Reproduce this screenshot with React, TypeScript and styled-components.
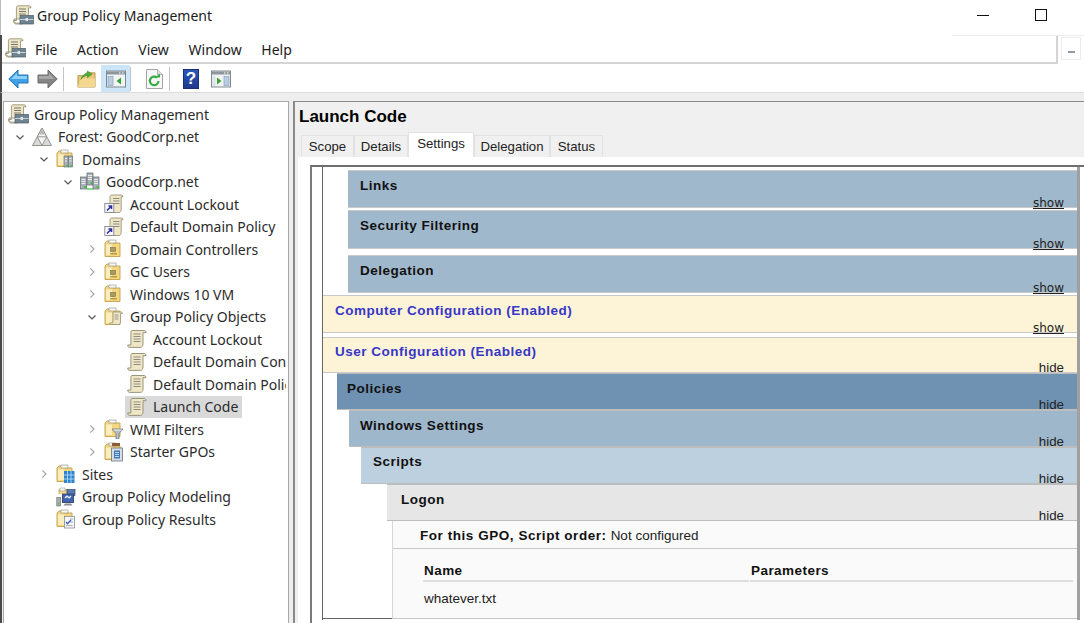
import React from "react";
import styled, { createGlobalStyle } from "styled-components";

const GlobalStyle = createGlobalStyle`
  html, body {
    margin: 0;
    padding: 0;
    background: #ffffff;
    overflow: hidden;
  }
  * {
    box-sizing: border-box;
  }
`;

const UI_FONT = `"Noto Sans", "Open Sans", sans-serif`;
const MMC_FONT = `"Liberation Sans", Arial, sans-serif`;

/* ---------- icons ---------- */

const Scroll = () => (
  <>
    <path d="M5 1.5h12c1.2 0 2 .9 2 2.2h-3V15c0 1.8-1 3.4-2.4 3.4H2.6C1.4 18.4.7 17.4.7 16h3.2V3.5c0-1.1.4-2 1.1-2z" fill="#efe6c4" stroke="#8f8a72" strokeWidth=".9" />
    <path d="M6.5 5h7M6.5 7.5h7M6.5 10h7M6.5 12.500h7" stroke="#8c8c86" strokeWidth="1" />
  </>
);

const GpoIcon = () => (
  <svg width="20" height="20" viewBox="0 0 20 20"><Scroll /></svg>
);

const ConsoleIcon = () => (
  <svg width="21" height="20" viewBox="0 0 21 20">
    <path d="M5 .8h11c1.200 0 2 .8 2 2h-2.500V14H1c0 2 .8 3.600 2 4.200h6V19H3C1.400 19 .4 17.400.4 15.500h3V2.800C3.400 1.600 4 .8 5 .8z" fill="#efe6c4" stroke="#8f8a72" strokeWidth=".8" />
    <path d="M6 4h7M6 6.500h7M6 9h7" stroke="#77776f" strokeWidth="1.100" />
    <rect x="7" y="10.500" width="13.500" height="8.500" fill="#6f8391" stroke="#4c5b66" strokeWidth=".7" />
    <path d="M7 14.500h13.500" stroke="#c8d2d8" strokeWidth="1" />
    <rect x="12.500" y="13" width="2.500" height="3" fill="#dfe5e8" />
  </svg>
);

const ForestIcon = () => (
  <svg width="20" height="20" viewBox="0 0 20 20">
    <path d="M10 1 19.500 18.500H.5z" fill="#d9d9d6" stroke="#8b8b88" strokeWidth=".9" />
    <path d="M5.300 9.800h9.400L10 18.500zM5.300 9.800 10 1l4.700 8.800" fill="#f5f5f3" stroke="#8b8b88" strokeWidth=".9" />
    <path d="M10 1.800 7 7.500h6z" fill="#b9b9b6" />
  </svg>
);

const Server = ({ x, y }: { x: number; y: number }) => (
  <g transform={`translate(${x} ${y})`}>
    <rect width="6" height="12" fill="#a8b1b6" stroke="#5f686d" strokeWidth=".7" />
    <path d="M1 2.500h4M1 4.500h4M1 6.500h4" stroke="#eef1f2" strokeWidth=".9" />
    <rect x="3.500" y="9" width="2" height="2" fill="#3fc23f" />
  </g>
);

const ServersIcon = () => (
  <svg width="20" height="20" viewBox="0 0 20 20">
    <Server x={7} y={1} />
    <Server x={.5} y={5} />
    <Server x={13} y={5} />
    <path d="M6.500 17h7" stroke="#3fc23f" strokeWidth="1.200" />
  </svg>
);

const Folder = ({ children }: { children?: React.ReactNode }) => (
  <svg width="20" height="20" viewBox="0 0 20 20">
    <path d="M1 4V17.500H16V4H9L8 2H3z" fill="#f5d681" stroke="#c3a04e" strokeWidth=".9" />
    <path d="M2 5.500h6V16H2z" fill="#fbeebe" />
    <rect x="5" y="1" width="7" height="3" fill="#f7f7f4" stroke="#8f8f88" strokeWidth=".6" />
    {children}
  </svg>
);

const OuIcon = () => (
  <Folder>
    <rect x="6.500" y="8.500" width="5" height="4" fill="#a99a62" stroke="#7b6e3d" strokeWidth=".6" />
    <rect x="6" y="14" width="7" height="1.500" fill="#b59c44" />
  </Folder>
);

const DomainsIcon = () => (
  <Folder>
    <g transform="translate(8 7)">
      <rect width="4" height="11" fill="#a8b1b6" stroke="#5f686d" strokeWidth=".6" />
      <rect x="4.500" width="4" height="11" fill="#a8b1b6" stroke="#5f686d" strokeWidth=".6" />
      <path d="M1 2.500h2M5.500 2.500h2M1 5h2M5.500 5h2" stroke="#ffffff" strokeWidth=".8" />
      <rect x="2" y="9" width="1.500" height="1.500" fill="#3fc23f" />
      <rect x="6.500" y="9" width="1.500" height="1.500" fill="#3fc23f" />
    </g>
  </Folder>
);

const GpoFolderIcon = () => (
  <Folder>
    <path d="M9 5h8c1 0 1.500.6 1.500 1.500h-2V15c0 1.500-.7 2.500-2 2.500H7.500c-1 0-1.500-.7-1.500-1.700h3z" fill="#efe6c4" stroke="#8f8a72" strokeWidth=".7" />
    <path d="M10.500 8h4M10.500 10h4M10.500 12h4" stroke="#8c8c86" strokeWidth=".8" />
  </Folder>
);

const FilterFolderIcon = () => (
  <Folder>
    <path d="M8 10h11l-4 4.500V20h-3v-5.500z" fill="#b7bfc6" stroke="#66717a" strokeWidth=".7" />
    <path d="M9.500 11h8" stroke="#f2f4f5" strokeWidth=".9" />
  </Folder>
);

const StarterFolderIcon = () => (
  <Folder>
    <rect x="8" y="1" width="8" height="3" fill="#8d5b3c" />
    <rect x="7.500" y="6" width="11" height="13" fill="#d7dde2" stroke="#6b757d" strokeWidth=".8" />
    <rect x="10" y="8.500" width="6" height="8" fill="#3e78bd" />
    <path d="M11 10.500h4M11 12.500h4M11 14.500h4" stroke="#ffffff" strokeWidth=".7" />
  </Folder>
);

const SitesIcon = () => (
  <Folder>
    <rect x="8" y="7" width="10.500" height="12" fill="#2d83cf" />
    <path d="M11.500 7v12M15 7v12M8 11h10.500M8 15h10.500" stroke="#bfe0f7" strokeWidth=".8" />
  </Folder>
);

const ModelingIcon = () => (
  <svg width="21" height="20" viewBox="0 0 21 20">
    <path d="M3 7V2.500h8V6" fill="#f5d681" stroke="#c3a04e" strokeWidth=".8" />
    <rect x="4" y="1" width="5" height="3" fill="#f6f6f3" stroke="#8f8f88" strokeWidth=".5" />
    <rect x="11" y="2.500" width="8" height="6" fill="#587bb8" stroke="#38476e" strokeWidth=".7" />
    <rect x="6.500" y="7" width="11" height="8.500" fill="#3f64b5" stroke="#3a4254" strokeWidth=".9" />
    <path d="M9 11l2-2 2 2 2-2" stroke="#ffffff" strokeWidth="1.100" fill="none" />
    <path d="M9 16.500h6l1.500 2h-9z" fill="#8b9197" />
    <rect x=".8" y="10.500" width="3.700" height="8.500" fill="#a9b0b4" stroke="#5f686d" strokeWidth=".6" />
    <rect x="1.800" y="16" width="1.500" height="1.500" fill="#3fc23f" />
  </svg>
);

const ResultsIcon = () => (
  <Folder>
    <rect x="8.500" y="7.500" width="10" height="11.500" fill="#f4f6f8" stroke="#8a9096" strokeWidth=".8" />
    <path d="M14 10h3M14 13h3" stroke="#9aa1a7" strokeWidth=".8" />
    <path d="M10 13l1.500 1.800L15 11" stroke="#3a62b5" strokeWidth="1.300" fill="none" />
    <path d="M10 16.500h6.500" stroke="#9aa1a7" strokeWidth=".8" />
  </Folder>
);

const LinkIcon = () => (
  <svg width="20" height="20" viewBox="0 0 20 20">
    <path d="M8 1h9.500c.8 0 1.500.7 1.500 1.700h-1.800V15c0 2-.8 3.500-2 3.500H6V2.500C6 1.700 7 1 8 1z" fill="#efe6c4" stroke="#8f8a72" strokeWidth=".8" />
    <path d="M9 4.500h6.500M9 7h6.500M9 9.500h6.500" stroke="#8c8c86" strokeWidth="1" />
    <rect x=".8" y="9.500" width="9" height="9" fill="#f7f7fb" stroke="#7a7a8a" strokeWidth=".8" />
    <path d="M3 16.500 7 12.500M4.500 12h3v3" stroke="#2a2f9e" strokeWidth="1.500" fill="none" />
  </svg>
);

const Caret = ({ open }: { open: boolean }) => (
  <svg width="10" height="10" viewBox="0 0 10 10">
    {open ? (
      <path d="M1.500 3.500 5 7l3.500-3.500" fill="none" stroke="#555555" strokeWidth="1.200" />
    ) : (
      <path d="M3.300 1.300 7 5 3.300 8.700" fill="none" stroke="#a6a6a6" strokeWidth="1.200" />
    )}
  </svg>
);

const BackIcon = () => (
  <svg width="21" height="20" viewBox="0 0 21 20">
    <path d="M10 1 .8 10 10 19v-5h10V6H10z" fill="#3ea0e6" stroke="#1f75bf" strokeWidth="1" />
    <path d="M9 4 3 10h16V7H9z" fill="#8fd0f7" />
  </svg>
);

const ForwardIcon = () => (
  <svg width="21" height="20" viewBox="0 0 21 20">
    <path d="M11 1l9.200 9L11 19v-5H1V6h10z" fill="#858585" stroke="#6c6c6c" strokeWidth="1" />
    <path d="M12 4l6 6H2V7h10z" fill="#a8a8a8" />
  </svg>
);

const UpFolderIcon = () => (
  <svg width="19" height="19" viewBox="0 0 20 20">
    <path d="M1 7V19H19V4H10L8 7z" fill="#e9c878" stroke="#b18f44" strokeWidth=".9" />
    <path d="M1 19 4 10h15v9z" fill="#f3d88f" />
    <path d="M4 11c2-5 4-6 7-6.500V2l5 3.500-5 3.500V6.800C8.500 7 6 8 4 11z" fill="#4bae3a" stroke="#2f7f28" strokeWidth=".5" />
  </svg>
);

const PaneIcon = ({ flip }: { flip?: boolean }) => (
  <svg width="20" height="18" viewBox="0 0 20 18">
    <rect x=".5" y="1" width="19" height="16" fill="#f1f3f4" stroke="#7f8a90" strokeWidth="1" />
    <rect x="1" y="1.500" width="18" height="3" fill="#8c979d" />
    <path d="M13 3h1.500M16 3h1.500" stroke="#ffffff" strokeWidth="1" />
    {flip ? (
      <>
        <path d="M6 7.500v7l4.500-3.500z" fill="#36a336" />
        <rect x="13" y="6.500" width="5" height="9" fill="#b9cde3" stroke="#7f98b5" strokeWidth=".6" />
        <rect x="1.500" y="6" width="3" height="10" fill="#dfe3e5" />
      </>
    ) : (
      <>
        <rect x="2" y="6.500" width="5" height="9" fill="#b9cde3" stroke="#7f98b5" strokeWidth=".6" />
        <path d="M15 7.500v7L10.500 11z" fill="#36a336" />
      </>
    )}
  </svg>
);

const RefreshIcon = () => (
  <svg width="17" height="20" viewBox="0 0 17 20">
    <path d="M.5.500h11l5 5V19.500H.5z" fill="#f7f7f7" stroke="#a4a4a4" strokeWidth="1" />
    <path d="M11.500.500v5h5" fill="#e2e2e2" stroke="#a4a4a4" strokeWidth=".8" />
    <path d="M12.500 12a4.300 4.300 0 1 1-1.500-3.400" fill="none" stroke="#37ab3f" strokeWidth="2.200" />
    <path d="M9 8.500h5V4.500z" fill="#37ab3f" />
  </svg>
);

const HelpGlyph = styled.div`
  width: 16px;
  height: 20px;
  background: linear-gradient(#2b56b8, #1f3a8c);
  border: 1px solid #1b2f73;
  color: #ffffff;
  font: bold 17px/18px ${MMC_FONT};
  text-align: center;
`;

/* ---------- window chrome ---------- */

const Page = styled.div`
  width: 1084px;
  height: 623px;
  display: flex;
  flex-direction: column;
  overflow: hidden;
  background: #ffffff;
  font-family: ${UI_FONT};
  color: #1c1c1c;
`;

const TitleBar = styled.header`
  height: 35px;
  flex: none;
  display: flex;
  align-items: center;
  padding: 0 37px 5px 12px;
  gap: 3px;
  font-size: 14px;
  border-left: 1px solid #bdbdbd;
`;

const TitleText = styled.span`
  flex: 1;
`;

const WinButtons = styled.div`
  display: flex;
  align-items: center;
  gap: 46px;
`;

const MinButton = styled.div`
  width: 12px;
  height: 1px;
  background: #111111;
`;

const MaxButton = styled.div`
  width: 12px;
  height: 12px;
  border: 1px solid #111111;
`;

const MenuRow = styled.div`
  position: relative;
  height: 29px;
  flex: none;
  display: flex;
  border-left: 2px solid #4a4a4a;
  &::before {
    content: "";
    position: absolute;
    top: 0;
    right: 0;
    width: 132px;
    height: 1px;
    background: #ececec;
  }
`;

const MenuBar = styled.nav`
  flex: 1;
  display: flex;
  align-items: center;
  gap: 19.700px;
  padding: 2px 0 0 3px;
  border-right: 2px solid #d4d4d4;
  border-bottom: 2px solid #d4d4d4;
  font-size: 14px;
`;

const MenuLogo = styled.div`
  display: flex;
  margin: -3px -10.700px 0 0;
`;

const MenuExtra = styled.div`
  width: 26px;
  display: flex;
  padding: 2px 3px 4px 3px;
`;

const MiniBox = styled.div`
  flex: 1;
  border: 1px solid #ececec;
  position: relative;
  &::after {
    content: "";
    position: absolute;
    left: 6px;
    bottom: 6px;
    width: 7px;
    height: 2px;
    background: #8c9aa8;
  }
`;

const ToolBar = styled.div`
  height: 29px;
  flex: none;
  display: flex;
  align-items: center;
  padding: 1px 0 0 2px;
  border-left: 2px solid #4a4a4a;
  border-bottom: 1px solid #dcdcdc;
`;

const ToolSlot = styled.div<{ $w: number; $active?: boolean }>`
  width: ${(p) => p.$w}px;
  height: 27px;
  display: flex;
  align-items: center;
  justify-content: center;
  background: ${(p) => (p.$active ? "#cde5f8" : "transparent")};
`;

const ToolSep = styled.div`
  width: 1px;
  height: 24px;
  margin-right: 8px;
  background: #c4c4c4;
`;

const Workspace = styled.div`
  flex: 1;
  min-height: 0;
  display: flex;
  background: #eeeeee;
  padding: 8px 0 0 1px;
  border-left: 2px solid #4a4a4a;
`;

/* ---------- tree ---------- */

const TreePanel = styled.aside`
  width: 286px;
  flex: none;
  background: #ffffff;
  border: 1px solid #a8a8a8;
  border-bottom: none;
  padding-top: 1px;
  overflow: hidden;
`;

const TreeRow = styled.div<{ $level: number }>`
  height: 22.5px;
  display: flex;
  align-items: center;
  white-space: nowrap;
  overflow: hidden;
  margin-right: 2px;
  padding-left: ${(p) => (p.$level === 0 ? 4 : p.$level === 5 ? 99 : 24 * p.$level - 20)}px;
  font-size: 14px;
  color: #2b2b2b;
`;

const CaretSlot = styled.div`
  width: 24px;
  flex: none;
  display: flex;
  justify-content: center;
`;

const RowBody = styled.div<{ $selected?: boolean }>`
  height: 22px;
  display: flex;
  align-items: center;
  margin-left: -2px;
  padding: 0 4px 0 2px;
  background: ${(p) => (p.$selected ? "#d9d9d9" : "transparent")};
`;

const IconSlot = styled.div`
  width: 26px;
  flex: none;
  display: flex;
  align-items: center;
`;

type TreeItem = {
  level: number;
  label: string;
  icon: React.ReactNode;
  caret?: "open" | "closed";
  selected?: boolean;
};

const treeItems: TreeItem[] = [
  { level: 0, label: "Group Policy Management", icon: <ConsoleIcon /> },
  { level: 1, label: "Forest: GoodCorp.net", icon: <ForestIcon />, caret: "open" },
  { level: 2, label: "Domains", icon: <DomainsIcon />, caret: "open" },
  { level: 3, label: "GoodCorp.net", icon: <ServersIcon />, caret: "open" },
  { level: 4, label: "Account Lockout", icon: <LinkIcon /> },
  { level: 4, label: "Default Domain Policy", icon: <LinkIcon /> },
  { level: 4, label: "Domain Controllers", icon: <OuIcon />, caret: "closed" },
  { level: 4, label: "GC Users", icon: <OuIcon />, caret: "closed" },
  { level: 4, label: "Windows 10 VM", icon: <OuIcon />, caret: "closed" },
  { level: 4, label: "Group Policy Objects", icon: <GpoFolderIcon />, caret: "open" },
  { level: 5, label: "Account Lockout", icon: <GpoIcon /> },
  { level: 5, label: "Default Domain Controllers Policy", icon: <GpoIcon /> },
  { level: 5, label: "Default Domain Policy", icon: <GpoIcon /> },
  { level: 5, label: "Launch Code", icon: <GpoIcon />, selected: true },
  { level: 4, label: "WMI Filters", icon: <FilterFolderIcon />, caret: "closed" },
  { level: 4, label: "Starter GPOs", icon: <StarterFolderIcon />, caret: "closed" },
  { level: 2, label: "Sites", icon: <SitesIcon />, caret: "closed" },
  { level: 2, label: "Group Policy Modeling", icon: <ModelingIcon /> },
  { level: 2, label: "Group Policy Results", icon: <ResultsIcon /> },
];

/* ---------- details pane ---------- */

const DetailPane = styled.main`
  flex: 1;
  min-width: 0;
  margin-left: 4px;
  display: flex;
  flex-direction: column;
  border-left: 2px solid #8a8a8a;
  border-top: 1px solid #8a8a8a;
  background: #f0f0f0;
  font-family: ${MMC_FONT};
`;

const PaneTitle = styled.h1`
  margin: 0;
  height: 30px;
  flex: none;
  padding: 4px 0 0 4px;
  font-size: 17px;
  line-height: 22px;
  font-weight: bold;
  color: #000000;
`;

const TabStrip = styled.div`
  display: flex;
  align-items: flex-end;
  flex: none;
  height: 25px;
  padding-left: 6px;
`;

const Tab = styled.div<{ $w: number; $active?: boolean }>`
  width: ${(p) => p.$w}px;
  height: ${(p) => (p.$active ? 25 : 22)}px;
  padding-bottom: ${(p) => (p.$active ? 3 : 0)}px;
  display: flex;
  align-items: center;
  justify-content: center;
  font-size: 13.200px;
  color: #222222;
  background: ${(p) => (p.$active ? "#ffffff" : "#f0f0f0")};
  border: 1px solid #e2e2e2;
  border-bottom: none;
`;

const TabBody = styled.div`
  flex: 1;
  min-height: 0;
  margin-left: 3px;
  background: #ffffff;
  padding: 8px 0 0 12px;
`;

const Frame = styled.div`
  height: 100%;
  border-top: 2px solid #6f6f6f;
  border-left: 2px solid #7a7a7a;
  padding-left: 10px;
`;

const Report = styled.div`
  height: 453px;
  margin-right: 4px;
  padding-top: 3px;
  display: flex;
  flex-direction: column;
  border-left: 1px solid #666666;
  border-right: 3px solid #a0a0a0;
`;

const Band = styled.section<{
  $indent: number;
  $height: number;
  $top?: number;
  $pad: number;
  $bg: string;
  $line: string;
  $blue?: boolean;
  $lift?: number;
}>`
  flex: none;
  display: flex;
  justify-content: space-between;
  height: ${(p) => p.$height}px;
  margin-top: ${(p) => p.$top ?? 0}px;
  margin-left: ${(p) => p.$indent}px;
  padding: ${(p) => 7 - (p.$lift ?? 0)}px 13px 0 ${(p) => p.$pad}px;
  background: ${(p) => p.$bg};
  border-top: 1px solid ${(p) => p.$line};
  border-bottom: 1px solid ${(p) => p.$line};
  font-size: 13.500px;
  font-weight: bold;
  letter-spacing: 0.5px;
  line-height: 16px;
  color: ${(p) => (p.$blue ? "#3636c8" : "#111111")};
`;

const Toggle = styled.span<{ $shown?: boolean }>`
  align-self: flex-end;
  margin-bottom: -3px;
  font-family: ${(p) => (p.$shown ? `"DejaVu Sans", sans-serif` : MMC_FONT)};
  font-size: ${(p) => (p.$shown ? 12 : 13.300)}px;
  font-weight: normal;
  letter-spacing: 0;
  line-height: 14px;
  color: #222222;
  text-decoration: ${(p) => (p.$shown ? "underline" : "none")};
`;

const BodyRow = styled.div`
  flex: none;
  height: 98px;
  display: flex;
`;

const BodyGutter = styled.div`
  width: 69px;
  flex: none;
  border-bottom: 1px solid #666666;
`;

const BandBody = styled.div`
  flex: 1;
  min-width: 0;
  background: #fafafa;
  border-left: 1px solid #d8d8d8;
  border-bottom: 1px solid #c8c8c8;
  display: flex;
  flex-direction: column;
  font-size: 13.500px;
  color: #222222;
`;

const OrderRow = styled.div`
  height: 28px;
  flex: none;
  display: flex;
  align-items: center;
  gap: 4px;
  padding: 2px 0 0 27px;
  border-bottom: 1px solid #c8c8c8;
`;

const Strong = styled.b`
  font-size: 13.500px;
  letter-spacing: 0.55px;
  color: #111111;
`;

const ScriptTable = styled.div`
  display: grid;
  grid-template-columns: 326px 323px;
  column-gap: 1px;
  margin: 14px 0 0 30px;
`;

const HeadCell = styled.div`
  height: 19px;
  padding-left: 1px;
  font-size: 13.500px;
  font-weight: bold;
  letter-spacing: 0.45px;
  line-height: 16px;
  color: #111111;
  border-bottom: 2px solid #dedede;
`;

const DataCell = styled.div`
  padding: 9px 0 0 1px;
`;

const tabs = [
  { label: "Scope", w: 53 },
  { label: "Details", w: 54 },
  { label: "Settings", w: 66, active: true },
  { label: "Delegation", w: 76 },
  { label: "Status", w: 53 },
];

const BLUE = { $bg: "#a0b8cb", $line: "#c9c9c9" };
const CREAM = { $bg: "#fdf4d7", $line: "#c9c9c9", $blue: true };

export default function App() {
  return (
    <Page>
      <GlobalStyle />
      <TitleBar>
        <ConsoleIcon />
        <TitleText>Group Policy Management</TitleText>
        <WinButtons>
          <MinButton />
          <MaxButton />
        </WinButtons>
      </TitleBar>

      <MenuRow>
        <MenuBar>
          <MenuLogo><ConsoleIcon /></MenuLogo>
          <span>File</span>
          <span>Action</span>
          <span>View</span>
          <span>Window</span>
          <span>Help</span>
        </MenuBar>
        <MenuExtra><MiniBox /></MenuExtra>
      </MenuRow>

      <ToolBar>
        <ToolSlot $w={28}><BackIcon /></ToolSlot>
        <ToolSlot $w={31}><ForwardIcon /></ToolSlot>
        <ToolSep />
        <ToolSlot $w={29}><UpFolderIcon /></ToolSlot>
        <ToolSlot $w={29} $active><PaneIcon /></ToolSlot>
        <ToolSep />
        <ToolSlot $w={30}><RefreshIcon /></ToolSlot>
        <ToolSep />
        <ToolSlot $w={26}><HelpGlyph>?</HelpGlyph></ToolSlot>
        <ToolSlot $w={34}><PaneIcon flip /></ToolSlot>
      </ToolBar>

      <Workspace>
        <TreePanel>
          {treeItems.map((item, i) => (
            <TreeRow key={i} $level={item.level}>
              {item.level > 0 && (
                <CaretSlot>
                  {item.caret && <Caret open={item.caret === "open"} />}
                </CaretSlot>
              )}
              <RowBody $selected={item.selected}>
                <IconSlot>{item.icon}</IconSlot>
                <span>{item.label}</span>
              </RowBody>
            </TreeRow>
          ))}
        </TreePanel>

        <DetailPane>
          <PaneTitle>Launch Code</PaneTitle>
          <TabStrip>
            {tabs.map((t) => (
              <Tab key={t.label} $w={t.w} $active={t.active}>{t.label}</Tab>
            ))}
          </TabStrip>
          <TabBody>
            <Frame>
              <Report>
                <Band $indent={25} $height={38} $pad={12} {...BLUE}>
                  Links<Toggle $shown>show</Toggle>
                </Band>
                <Band $indent={25} $height={39} $top={2} $pad={12} {...BLUE}>
                  Security Filtering<Toggle $shown>show</Toggle>
                </Band>
                <Band $indent={25} $height={38} $top={6} $pad={12} {...BLUE}>
                  Delegation<Toggle $shown>show</Toggle>
                </Band>
                <Band $indent={0} $height={38} $top={2} $pad={12} {...CREAM}>
                  Computer Configuration (Enabled)<Toggle $shown>show</Toggle>
                </Band>
                <Band $indent={0} $height={36} $top={4} $pad={12} $lift={1} {...CREAM}>
                  User Configuration (Enabled)<Toggle>hide</Toggle>
                </Band>
                <Band $indent={14} $height={37} $pad={10} $bg="#6f92b3" $line="#bdbdbd">
                  Policies<Toggle>hide</Toggle>
                </Band>
                <Band $indent={26} $height={37} $pad={11} $bg="#9fb7cb" $line="#bdbdbd">
                  Windows Settings<Toggle>hide</Toggle>
                </Band>
                <Band $indent={38} $height={37} $pad={12} $lift={1} $bg="#bdd0df" $line="#bdbdbd">
                  Scripts<Toggle>hide</Toggle>
                </Band>
                <Band $indent={64} $height={37} $pad={14} $bg="#e6e6e6" $line="#bdbdbd">
                  Logon<Toggle>hide</Toggle>
                </Band>
                <BodyRow>
                  <BodyGutter />
                  <BandBody>
                    <OrderRow>
                      <Strong>For this GPO, Script order:</Strong>
                      <span>Not configured</span>
                    </OrderRow>
                    <ScriptTable>
                      <HeadCell>Name</HeadCell>
                      <HeadCell>Parameters</HeadCell>
                      <DataCell>whatever.txt</DataCell>
                      <DataCell />
                    </ScriptTable>
                  </BandBody>
                </BodyRow>
              </Report>
            </Frame>
          </TabBody>
        </DetailPane>
      </Workspace>
    </Page>
  );
}
